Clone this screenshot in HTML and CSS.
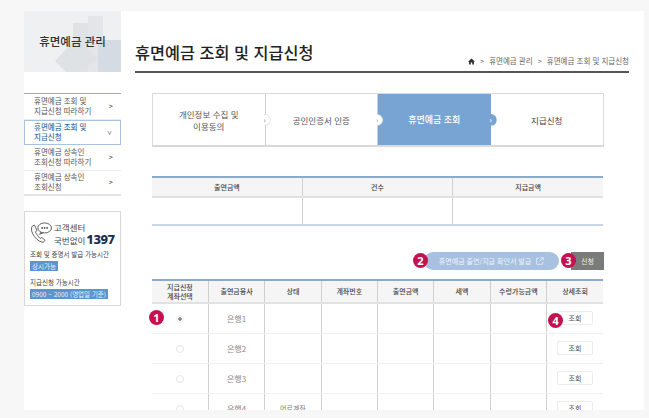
FILE: index.html
```html
<!DOCTYPE html>
<html lang="ko">
<head>
<meta charset="utf-8">
<title>휴면예금 조회 및 지급신청</title>
<link rel="stylesheet" href="styles.css">
</head>
<body>
<div class="panel">
  <aside class="side">
    <div class="side-head">
      <svg class="side-art" width="97" height="61" viewBox="0 0 97 61">
        <rect width="97" height="61" fill="#eff0f2"/>
        <rect x="49" y="12" width="15" height="49" fill="#e0e3e6"/>
        <rect x="64" y="5" width="15" height="56" fill="#e3e5e8"/>
        <polygon points="31,50 51,29 74,47 56,61 42,61" fill="#dfe2e5"/>
        <rect x="74" y="29" width="23" height="32" fill="#d5dbe2"/>
      </svg>
      <span class="side-title">휴면예금 관리</span>
    </div>
    <ul class="menu">
      <li class="menu-item"><span>휴면예금 조회 및<br>지급신청 따라하기</span><i>&gt;</i></li>
      <li class="menu-item active"><span>휴면예금 조회 및<br>지급신청</span><i>&#8744;</i></li>
      <li class="menu-item"><span>휴면예금 상속인<br>조회신청 따라하기</span><i>&gt;</i></li>
      <li class="menu-item"><span>휴면예금 상속인<br>조회신청</span><i>&gt;</i></li>
    </ul>
    <div class="help">
      <div class="help-top">
        <svg class="help-icon" width="22" height="21" viewBox="0 0 24 23" fill="none" stroke="#555" stroke-width="1">
          <path d="M3 4 C1 6 1 9 3 13 C5 17 9 21 13 22 C15 22.500 16 21 16.500 20 L13 17 L11 18 C9 16 7 13 6 11 L7.500 9 L5 3.500 Z"/>
          <ellipse cx="16" cy="6.500" rx="7.500" ry="5.500"/>
          <path d="M12 11 L10.500 13.500 L14.500 11.800"/>
          <circle cx="13.300" cy="6.500" r=".6" fill="#555"/>
          <circle cx="16" cy="6.500" r=".6" fill="#555"/>
          <circle cx="18.700" cy="6.500" r=".6" fill="#555"/>
        </svg>
        <div class="help-call">고객센터<br>국번없이<b>1397</b></div>
      </div>
      <p class="help-label">조회 및 증명서 발급 가능시간</p>
      <span class="help-tag">상시가능</span>
      <p class="help-label second">지급신청 가능시간</p>
      <span class="help-tag">0900 ~ 2000 (영업일 기준)</span>
    </div>
  </aside>
  <main class="main">
    <header class="page-head">
      <h1>휴면예금 조회 및 지급신청</h1>
      <nav class="crumbs">
        <svg width="7" height="7" viewBox="0 0 8 8"><path d="M4 .5 L8 4.200 H6.800 V7.500 H4.800 V5.200 H3.200 V7.500 H1.200 V4.200 H0 Z" fill="#333"/></svg>
        <span>&gt;</span><span>휴면예금 관리</span><span>&gt;</span><span>휴면예금 조회 및 지급신청</span>
      </nav>
    </header>
    <div class="content">
      <ol class="steps">
        <li class="step">개인정보 수집 및<br>이용동의<i class="node">&#8250;</i></li>
        <li class="step">공인인증서 인증<i class="node">&#8250;</i></li>
        <li class="step current">휴면예금 조회<i class="node">&#8250;</i></li>
        <li class="step last">지급신청</li>
      </ol>
      <table class="summary">
        <tr><th>출연금액</th><th>건수</th><th>지급금액</th></tr>
        <tr><td></td><td></td><td></td></tr>
      </table>
      <div class="actions">
        <span class="btn-wrap"><b class="badge badge-pill">2</b><a class="btn-pill">휴면예금 출연/지급 확인서 발급
          <svg width="8" height="8" viewBox="0 0 8 8" fill="none" stroke="#e4edf7" stroke-width=".8"><path d="M3 1.200 H.7 V7.300 H6.800 V5 M4.500 .7 H7.300 V3.500 M7.300 .7 L3.500 4.500"/></svg>
        </a></span>
        <span class="btn-wrap"><b class="badge badge-apply">3</b><a class="btn-apply">신청</a></span>
      </div>
      <table class="list">
        <tr>
          <th>지급신청<br>계좌선택</th><th>출연금융사</th><th>상태</th><th>계좌번호</th><th>출연금액</th><th>세액</th><th>수령가능금액</th><th>상세조회</th>
        </tr>
        <tr>
          <td class="pick"><b class="badge badge-radio">1</b><i class="radio on"></i></td><td class="bank">은행1</td><td></td><td></td><td></td><td></td><td></td>
          <td class="pick"><b class="badge badge-view">4</b><a class="btn-view">조회</a></td>
        </tr>
        <tr>
          <td class="pick"><i class="radio"></i></td><td class="bank">은행2</td><td></td><td></td><td></td><td></td><td></td>
          <td class="pick"><a class="btn-view">조회</a></td>
        </tr>
        <tr>
          <td class="pick"><i class="radio"></i></td><td class="bank">은행3</td><td></td><td></td><td></td><td></td><td></td>
          <td class="pick"><a class="btn-view">조회</a></td>
        </tr>
        <tr>
          <td class="pick"><i class="radio"></i></td><td class="bank">은행4</td><td class="state">어르계좌</td><td></td><td></td><td></td><td></td>
          <td class="pick"><a class="btn-view">조회</a></td>
        </tr>
      </table>
    </div>
  </main>
</div>
</body>
</html>
```
FILE: styles.css
```css
* { box-sizing: border-box; }
html, body { margin: 0; height: 418px; overflow: hidden; }
body {
  background: #f7f7f7;
  padding: 11px 5px 8px 24px;
  font-family: "Noto Sans CJK KR", "Noto Sans", sans-serif;
  color: #444;
  font-size: 7px;
}
.panel {
  display: flex;
  height: 399px;
  background: #fff;
  overflow: hidden;
}
.side { width: 97px; flex: none; }
.side-head {
  position: relative;
  height: 61px;
  display: flex;
  align-items: center;
  justify-content: center;
}
.side-art { position: absolute; inset: 0; }
.side-title {
  position: relative;
  font-size: 11.500px;
  font-weight: 500;
  color: #333;
  margin-top: -2px;
}
.menu {
  list-style: none;
  margin: 21px 0 0;
  padding: 0;
  border-top: 1px solid #8fb0cf;
}
.menu-item {
  display: flex;
  justify-content: space-between;
  align-items: center;
  height: 25.500px;
  padding: 0 8px 0 10px;
  line-height: 10.500px;
  border-bottom: 1px solid #ececec;
  font-size: 7.500px;
  color: #555;
}
.menu-item i { font-style: normal; font-size: 7px; font-weight: 700; color: #555; }
.menu-item.active {
  border: 1px solid #a9c4e0;
  color: #3a6ea5;
  font-weight: 500;
  padding-left: 9px;
  padding-right: 8px;
}
.menu-item.active i { font-size: 5px; }
.menu-item:last-child { border-bottom: 2px solid #e4e4e4; }
.help {
  margin-top: 15px;
  height: 95px;
  border: 1px solid #d8d8d8;
  padding: 9px 4px 0 5px;
}
.help-top { display: flex; gap: 2px; align-items: center; margin-bottom: 3px; }
.help-icon { flex: none; margin-top: -2px; }
.help-call { font-size: 8.500px; line-height: 12px; color: #444; white-space: nowrap; }
.help-call b {
  font-size: 13px;
  font-weight: 800;
  color: #1a2f4d;
  letter-spacing: -.4px;
  margin-left: 1px;
  font-family: "Noto Sans", sans-serif;
}
.help-label { margin: 4px 0 2px; font-size: 6.500px; line-height: 9px; color: #444; white-space: nowrap; }
.help-label.second { margin-top: 7px; }
.help-tag {
  display: inline-block;
  background: #5b94cf;
  color: #e8f1fa;
  font-size: 6.500px;
  line-height: 10px;
  padding: 0 2px;
  white-space: nowrap;
}
.main { width: 494px; margin-left: 14px; flex: none; }
.page-head {
  height: 62px;
  display: flex;
  justify-content: space-between;
  align-items: flex-end;
  border-bottom: 2px solid #555;
  padding-bottom: 2px;
}
.page-head h1 {
  margin: 0 0 5px;
  font-size: 16.300px;
  line-height: 24px;
  font-weight: 500;
  color: #222;
}
.crumbs {
  display: flex;
  align-items: center;
  gap: 5px;
  margin-bottom: 3px;
  font-size: 7.500px;
  line-height: 10px;
  color: #666;
}
.content { padding-left: 17px; width: 469px; }
.steps {
  list-style: none;
  margin: 20px 0 0;
  padding: 0;
  display: grid;
  grid-template-columns: repeat(4, 1fr);
  height: 54px;
  border: 1px solid #d9d9d9;
  border-bottom-width: 2px;
}
.step {
  position: relative;
  display: flex;
  align-items: center;
  justify-content: center;
  text-align: center;
  font-size: 8.500px;
  line-height: 12px;
  color: #555;
  border-right: 1px solid #cfcfcf;
  flex-wrap: wrap;
  align-content: center;
}
.step.last { border-right: 0; color: #444; }
.step.current { background: #77a4d2; color: #fff; font-size: 9px; font-weight: 500; border-right: 0; }
.node {
  position: absolute;
  z-index: 1;
  right: -6px;
  top: 50%;
  margin-top: -6px;
  width: 12px;
  height: 12px;
  border-radius: 50%;
  background: #fff;
  border: 1px solid #ddd;
  font-style: normal;
  font-size: 8px;
  line-height: 9px;
  color: #888;
  text-align: center;
  clip-path: inset(0 0 0 5.500px);
}
.current .node {
  background: #77a4d2;
  border-color: #77a4d2;
  color: #fff;
}
.summary, .list {
  width: 451px;
  table-layout: fixed;
  border-collapse: collapse;
  text-align: center;
}
.summary { margin-top: 29px; border-top: 2px solid #8aabcc; border-bottom: 2px solid #c7d6e6; }
.summary th, .list th {
  background: #f5f5f5;
  font-size: 7px;
  font-weight: 500;
  color: #444;
  border-bottom: 2px solid #e2e2e2;
  padding: 0;
}
.summary th { height: 20px; }
.summary td { height: 28px; padding: 0; }
.summary th + th, .summary td + td { border-left: 1px solid #d0d0d0; }
.actions {
  display: flex;
  justify-content: flex-end;
  gap: 12px;
  height: 18px;
  margin-top: 26px;
}
.btn-wrap { position: relative; display: block; }
.btn-pill {
  display: flex;
  align-items: center;
  justify-content: center;
  gap: 5px;
  width: 135px;
  height: 18px;
  background: #a9c1e0;
  color: #eef4fb;
  border-radius: 9px;
  font-size: 7px;
}
.btn-apply {
  display: block;
  width: 33px;
  height: 18px;
  background: #7b7b7b;
  color: #eee;
  text-align: center;
  line-height: 18px;
  font-size: 7px;
}
.badge {
  position: absolute;
  width: 15px;
  height: 15px;
  border-radius: 50%;
  background: #c4114f;
  color: #fff;
  font: 700 11px/15px "Noto Sans", sans-serif;
  text-align: center;
  z-index: 2;
}
.badge-pill { left: -11px; top: 1px; }
.badge-apply { left: -10px; top: 1px; }
.badge-radio { left: -3px; top: 6px; }
.badge-view { left: 1px; top: 9px; }
.list { margin-top: 9px; border-top: 2px solid #8aabcc; }
.list th { height: 23px; line-height: 9px; }
.list th + th, .list td + td { border-left: 1px solid #cfcfcf; }
.list td { height: 30px; padding: 0; border-bottom: 1px solid #f0f0f0; position: relative; }
.pick { text-align: center; }
.bank { font-size: 8px; color: #888; }
.state { font-size: 7px; color: #777; }
.radio {
  display: inline-block;
  vertical-align: middle;
  width: 8px;
  height: 8px;
  border-radius: 50%;
  border: 1px solid #e6e6e6;
  background: #fff;
}
.radio.on { border-color: #eee; background: radial-gradient(circle, #888 0 1.500px, #fff 2px); }
.btn-view {
  display: inline-block;
  vertical-align: middle;
  width: 36px;
  height: 14px;
  border: 1px solid #ececec;
  border-radius: 2px;
  background: #fff;
  font-size: 7px;
  line-height: 12px;
  color: #555;
}
```
